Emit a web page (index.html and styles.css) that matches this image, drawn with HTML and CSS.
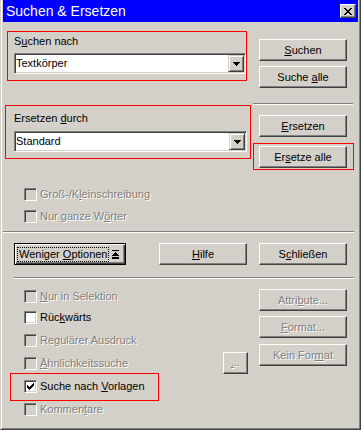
FILE: index.html
```html
<!DOCTYPE html>
<html lang="de">
<head>
    <meta charset="UTF-8">
    <title>Suchen &amp; Ersetzen</title>
    <link rel="stylesheet" href="styles.css">
</head>
<body>
    <div class="window">
        <div class="frame">
            <div class="titlebar">
                <span class="title">Suchen &amp; Ersetzen</span>
                <span class="close-btn">
                    <svg width="8" height="7" viewBox="0 0 8 7"><path d="M0 0h2v1H0zM6 0h2v1H6zM1 1h2v1H1zM5 1h2v1H5zM2 2h4v1H2zM3 3h2v1H3zM2 4h4v1H2zM1 5h2v1H1zM5 5h2v1H5zM0 6h2v1H0zM6 6h2v1H6z" fill="#000"/></svg>
                </span>
            </div>

            <div class="client">
                <!-- search / replace fields with the buttons on the right -->
                <div class="upper">
                    <div class="upper-left">
                        <div class="mark mark-find">
                            <div class="field-label">S<u>u</u>chen nach</div>
                            <div class="combo combo-find">
                                <span class="combo-text">Textkörper</span>
                                <span class="combo-arrow"><svg width="7" height="4" viewBox="0 0 7 4"><path d="M0 0h7v1H0zM1 1h5v1H1zM2 2h3v1H2zM3 3h1v1H3z" fill="#000"/></svg></span>
                            </div>
                        </div>
                        <div class="mark mark-replace">
                            <div class="field-label">Ersetzen <u>d</u>urch</div>
                            <div class="combo combo-replace">
                                <span class="combo-text">Standard</span>
                                <span class="combo-arrow"><svg width="7" height="4" viewBox="0 0 7 4"><path d="M0 0h7v1H0zM1 1h5v1H1zM2 2h3v1H2zM3 3h1v1H3z" fill="#000"/></svg></span>
                            </div>
                        </div>
                        <div class="checks checks-upper">
                            <div class="check disabled"><span class="box"></span><span class="check-text">Groß-/K<u>l</u>einschreibung</span></div>
                            <div class="check disabled"><span class="box"></span><span class="check-text">Nur ganze W<u>ö</u>rter</span></div>
                        </div>
                    </div>
                    <div class="upper-right">
                        <div class="btn btn-find"><span><u>S</u>uchen</span></div>
                        <div class="btn btn-find-all"><span>Suche <u>a</u>lle</span></div>
                        <div class="sep sep-short"></div>
                        <div class="btn btn-replace"><span><u>E</u>rsetzen</span></div>
                        <div class="mark mark-replace-all">
                            <div class="btn"><span>Er<u>s</u>etze alle</span></div>
                        </div>
                    </div>
                </div>

                <div class="sep sep-full"></div>

                <div class="action-row">
                    <div class="btn btn-default">
                        <span class="focus">Weniger <u>O</u>ptionen</span>
                        <svg class="less-icon" width="7" height="9" viewBox="0 0 7 9"><path d="M0 0h7v1H0zM3 2h1v1H3zM2 3h3v1H2zM1 4h5v1H1zM0 5h7v1H0zM0 7h7v2H0z" fill="#000"/></svg>
                    </div>
                    <div class="btn btn-help"><span><u>H</u>ilfe</span></div>
                    <div class="btn btn-close"><span>S<u>c</u>hließen</span></div>
                </div>

                <div class="sep sep-lower"></div>

                <!-- extra options -->
                <div class="lower">
                    <div class="lower-left">
                        <div class="check disabled row-selection"><span class="box"></span><span class="check-text"><u>N</u>ur in Selektion</span></div>
                        <div class="check row-backwards"><span class="box"></span><span class="check-text">Rüc<u>k</u>wärts</span></div>
                        <div class="check disabled row-regex"><span class="box"></span><span class="check-text">Regulärer Ausdruck</span></div>
                        <div class="check disabled row-similar">
                            <span class="box"></span><span class="check-text"><u>Ä</u>hnlichkeitssuche</span>
                            <div class="btn btn-dots disabled"><span><u>.</u>..</span></div>
                        </div>
                        <div class="mark mark-styles">
                            <div class="check">
                                <span class="box"><svg width="7" height="7" viewBox="0 0 7 7"><path d="M0 2h1v3H0zM1 3h1v3H1zM2 4h1v3H2zM3 3h1v3H3zM4 2h1v3H4zM5 1h1v3H5zM6 0h1v3H6z" fill="#000"/></svg></span>
                                <span class="check-text">Suche nach <u>V</u>orlagen</span>
                            </div>
                        </div>
                        <div class="check disabled row-comments"><span class="box"></span><span class="check-text">Kommen<u>t</u>are</span></div>
                    </div>
                    <div class="lower-right">
                        <div class="btn disabled btn-attr"><span>Attri<u>b</u>ute...</span></div>
                        <div class="btn disabled btn-format"><span><u>F</u>ormat...</span></div>
                        <div class="btn disabled btn-noformat"><span>Kein For<u>m</u>at</span></div>
                    </div>
                </div>
            </div>
        </div>
    </div>
</body>
</html>
```

FILE: styles.css
```css
body {
    margin: 0;
    font-family: Tahoma, "Liberation Sans", Arial, sans-serif;
    font-size: 11px;
    color: #000;
    background: #fff;
}

/* Window frame */
.window {
    width: 361px;
    height: 430px;
    box-sizing: border-box;
    border-style: solid;
    border-width: 0 1px 1px 1px;
    border-color: #d4d0c8 #404040 #404040 #d4d0c8;
    background: repeating-conic-gradient(#d9d6cf 0 25%, #cfcbc3 0 50%) 0 0 / 2px 2px;
}

.frame {
    height: 100%;
    box-sizing: border-box;
    border-style: solid;
    border-width: 0 1px 1px 1px;
    border-color: #fff #808080 #808080 #fff;
    padding: 0 1px 1px 1px;
    display: flex;
    flex-direction: column;
}

.titlebar {
    height: 22px;
    flex: none;
    background: #0000fe;
    color: #fff;
    display: flex;
    align-items: center;
    justify-content: space-between;
    padding: 0 2px 0 3px;
}

.title {
    font-family: "Liberation Sans Narrow", "Liberation Sans", Arial, sans-serif;
    font-size: 14px;
}

.close-btn {
    width: 16px;
    height: 14px;
    box-sizing: border-box;
    border: 1px solid;
    border-color: #fff #404040 #404040 #fff;
    box-shadow: inset -1px -1px #808080;
    background: #d4d0c8;
    display: flex;
    align-items: center;
    justify-content: center;
}

.client {
    flex: 1;
}

/* red highlight boxes */
.mark {
    box-sizing: border-box;
    border: 1px solid #f00;
}

.mark-find {
    margin: 9px 0 0 4px;
    width: 240px;
    height: 50px;
    padding-left: 6px;
}

.mark-replace {
    margin: 24px 0 0 2px;
    width: 246px;
    height: 54px;
    padding-left: 8px;
}

.field-label {
    line-height: 13px;
}

.mark-find .field-label {
    margin-top: 3px;
}

.mark-replace .field-label {
    margin-top: 6px;
}

/* combo boxes */
.combo {
    box-sizing: border-box;
    height: 21px;
    border: 1px solid;
    border-color: #808080 #fff #fff #808080;
    box-shadow: inset 1px 1px #404040, inset -1px -1px #d4d0c8;
    background: #fff;
    padding: 1px;
    display: flex;
}

.combo-find {
    margin-top: 5px;
    width: 232px;
}

.combo-replace {
    margin-top: 6px;
    width: 233px;
}

.combo-text {
    flex: 1;
    line-height: 17px;
}

.combo-arrow {
    width: 16px;
    box-sizing: border-box;
    border: 1px solid;
    border-color: #d4d0c8 #404040 #404040 #d4d0c8;
    box-shadow: inset 1px 1px #fff, inset -1px -1px #808080;
    background: #d4d0c8;
    display: flex;
    align-items: center;
    justify-content: center;
}

/* upper block */
.upper,
.lower {
    display: grid;
    grid-template-columns: 250px 1fr;
    align-items: start;
}

.checks-upper {
    margin-top: 29px;
    display: flex;
    flex-direction: column;
    gap: 9px;
}

.check {
    display: flex;
    align-items: center;
    height: 13px;
    line-height: 13px;
    padding-left: 21px;
}

.box {
    width: 13px;
    height: 13px;
    flex: none;
    box-sizing: border-box;
    border: 1px solid;
    border-color: #808080 #fff #fff #808080;
    box-shadow: inset 1px 1px #404040, inset -1px -1px #d4d0c8;
    background: #fff;
    display: flex;
    align-items: center;
    justify-content: center;
    margin-right: 3px;
}

.check.disabled .box {
    background: transparent;
}

.disabled {
    color: #808080;
    text-shadow: 1px 1px 0 #fff;
}

/* buttons */
.btn {
    width: 88px;
    height: 22px;
    box-sizing: border-box;
    border: 1px solid;
    border-color: #fff #404040 #404040 #fff;
    box-shadow: inset -1px -1px #808080;
    display: flex;
    align-items: center;
    justify-content: center;
}

.upper-right .btn,
.lower-right .btn {
    margin-left: 6px;
}

.btn-find {
    margin-top: 17px;
}

.btn-find-all {
    margin-top: 5px;
}

.sep {
    border-top: 1px solid #808080;
    border-bottom: 1px solid #fff;
}

.sep-short {
    margin-top: 15px;
    width: 100px;
}

.btn-replace {
    margin-top: 10px;
}

.mark-replace-all {
    margin-top: 6px;
    width: 101px;
    height: 27px;
    padding-top: 2px;
}

.mark-replace-all .btn {
    margin-left: 5px;
}

.sep-full {
    margin: 8px 4px 0 0;
}

.action-row {
    display: flex;
    margin-top: 10px;
    padding-left: 11px;
}

.btn-default {
    width: 112px;
    border: 1px solid #000;
    box-shadow: inset 1px 1px #fff, inset -1px -1px #404040, inset -2px -2px #808080;
    justify-content: flex-start;
    padding-left: 3px;
}

.focus {
    outline: 1px dotted #000;
    line-height: 13px;
    padding: 0 1px;
}

.less-icon {
    margin-left: 4px;
}

.btn-help {
    margin-left: 33px;
}

.btn-close {
    margin-left: 12px;
}

.sep-lower {
    margin: 12px 4px 0 11px;
}

/* lower block */
.lower-left {
    padding-top: 11px;
}

.row-backwards {
    margin-top: 8px;
}

.row-regex,
.row-similar {
    margin-top: 10px;
}

.btn-dots {
    width: 25px;
    margin: -5px 5px -4px auto;
    align-items: flex-end;
    padding-bottom: 4px;
}

.mark-styles {
    margin: 3px 0 0 7px;
    width: 149px;
    height: 28px;
    padding-top: 6px;
}

.mark-styles .check {
    padding-left: 13px;
}

.row-comments {
    margin-top: 2px;
}

.btn-attr {
    margin-top: 10px;
}

.btn-format {
    margin-top: 5px;
}

.btn-noformat {
    margin-top: 6px;
}
```
